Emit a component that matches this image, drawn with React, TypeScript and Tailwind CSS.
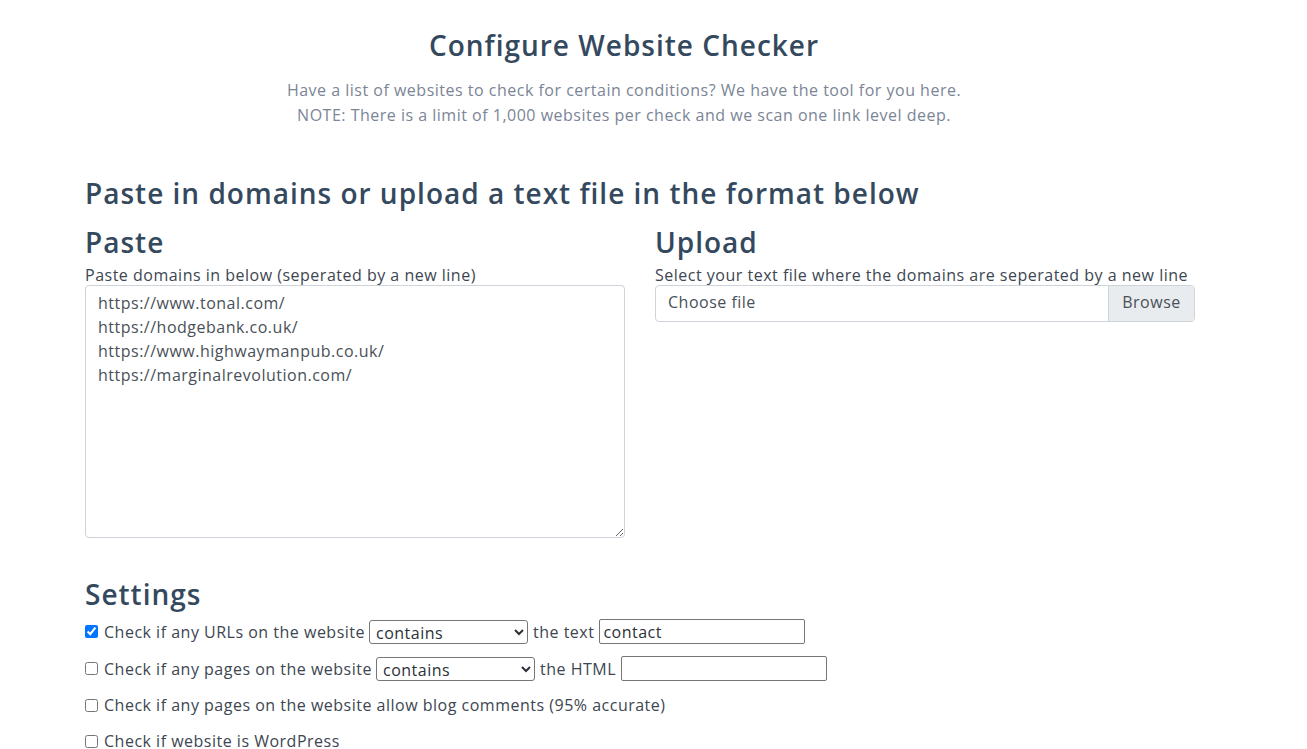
import React from "react";

const urls = [
  "https://www.tonal.com/",
  "https://hodgebank.co.uk/",
  "https://www.highwaymanpub.co.uk/",
  "https://marginalrevolution.com/",
].join("\n");

function Select({ w }: { w: string }) {
  return (
    <select
      defaultValue="contains"
      className={`${w} h-[24px] border border-[#767676] rounded-[3px] bg-white text-[16px] leading-[20px] text-[#2b3138] pl-[2px]`}
    >
      <option value="contains">contains</option>
      <option value="not">does not contain</option>
    </select>
  );
}

const h = "text-[28px] leading-[34px] font-semibold tracking-[1px] text-[#34495e]";

export default function App() {
  return (
    <div className="min-h-[749px] bg-white font-['Open_Sans',sans-serif] text-[16px] tracking-[0.5px] text-[#3d4651]">
      <div className="ml-[85px] w-[1110px]">
        <div className="pr-[32px] text-center">
          <h2 className={`mt-[28px] ${h}`}>Configure Website Checker</h2>
          <p className="mt-[16px] text-[16px] leading-[25px] text-[#7b8596]">
            Have a list of websites to check for certain conditions? We have the tool for you here.
            <br />
            NOTE: There is a limit of 1,000 websites per check and we scan one link level deep.
          </p>
        </div>

        <h3 className={`mt-[48px] ${h}`}>Paste in domains or upload a text file in the format below</h3>

        <div className="mt-[15px] grid grid-cols-2 gap-[30px]">
          <div>
            <h3 className={h}>Paste</h3>
            <label className="mt-[6px] block leading-[20px]">
              Paste domains in below (seperated by a new line)
            </label>
            <textarea
              defaultValue={urls}
              className="block h-[253px] w-full border border-[#ced4da] rounded-[4px] px-[12px] py-[5px] leading-[24px] text-[#495057]"
            />
          </div>
          <div>
            <h3 className={h}>Upload</h3>
            <label className="mt-[6px] block leading-[20px] whitespace-nowrap">
              Select your text file where the domains are seperated by a new line
            </label>
            <div className="flex h-[37px] w-full border border-[#ced4da] rounded-[4px] overflow-hidden text-[#495057]">
              <div className="flex flex-1 items-center pl-[12px] pb-[3px]">Choose file</div>
              <div className="flex w-[86px] items-center justify-center border-l border-[#ced4da] bg-[#e9ecef] pb-[3px]">
                Browse
              </div>
            </div>
          </div>
        </div>

        <h3 className={`mt-[39px] ${h}`}>Settings</h3>

        <div className="mt-[2px]">
          <div className="flex h-[37px] items-center">
            <input type="checkbox" defaultChecked className="m-0 mr-[6px] h-[13px] w-[13px]" />
            <span>Check if any URLs on the website</span>
            <span className="w-[4px]" />
            <Select w="w-[159px]" />
            <span className="w-[5px]" />
            <span>the text</span>
            <span className="w-[5px]" />
            <input
              defaultValue="contact"
              className="h-[25px] w-[206px] border border-[#767676] rounded-[2px] px-[3px] text-[#2b3138]"
            />
          </div>
          <div className="flex h-[37px] items-center">
            <input type="checkbox" className="m-0 mr-[6px] h-[13px] w-[13px]" />
            <span>Check if any pages on the website</span>
            <span className="w-[4px]" />
            <Select w="w-[159px]" />
            <span className="w-[5px]" />
            <span>the HTML</span>
            <span className="w-[5px]" />
            <input className="h-[25px] w-[206px] border border-[#767676] rounded-[2px] px-[3px]" />
          </div>
          <div className="flex h-[36px] items-center">
            <input type="checkbox" className="m-0 mr-[6px] h-[13px] w-[13px]" />
            <span>Check if any pages on the website allow blog comments (95% accurate)</span>
          </div>
          <div className="flex h-[36px] items-center">
            <input type="checkbox" className="m-0 mr-[6px] h-[13px] w-[13px]" />
            <span>Check if website is WordPress</span>
          </div>
        </div>
      </div>
    </div>
  );
}
